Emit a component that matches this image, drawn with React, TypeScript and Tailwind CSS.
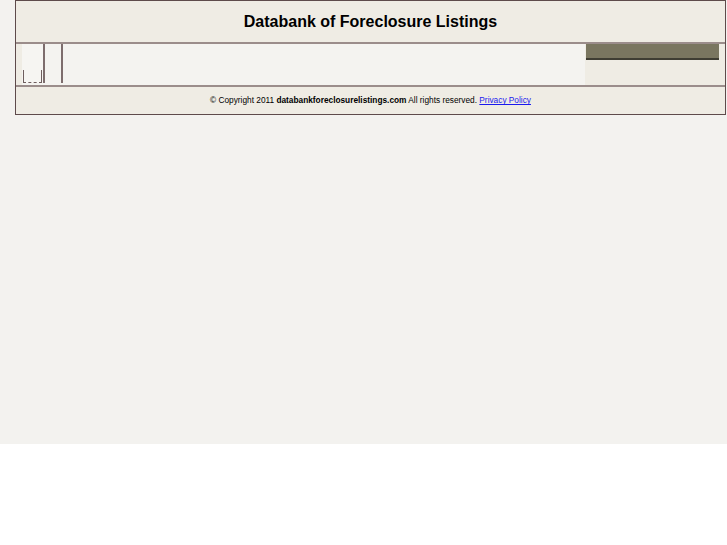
export default function App() {
  return (
    <div className="min-h-[444px] bg-[#f3f2ef] pl-[15px] pr-px font-['Liberation_Sans',Arial,sans-serif]">
      <div className="border border-[#5e4b4b] bg-[#efece4]">
        <div className="flex h-[43px] items-center justify-center border-b-2 border-[#9b8d8b]">
          <h1 className="text-[16px] font-bold text-black">Databank of Foreclosure Listings</h1>
        </div>
        <div className="flex h-[43px] border-b-2 border-[#9b8d8b]">
          <div className="flex flex-1 bg-[#f4f3f0]">
            <div className="w-[6px] bg-[#efece4]" />
            <div className="flex h-[39px] w-[21px] items-end bg-[#f6f5f2] pl-px">
              <div className="relative h-[13px] w-[19px]">
                <div className="absolute inset-y-0 left-0 w-px bg-[#6e5e5e]" />
                <div className="absolute inset-y-0 right-0 w-px bg-[#6e5e5e]" />
                <div className="absolute inset-x-0 bottom-0 border-b border-dashed border-[#6e5e5e]" />
              </div>
            </div>
            <div className="h-[39px] w-[2px] bg-[#7d6d6d]" />
            <div className="w-[16px]" />
            <div className="h-[39px] w-[2px] bg-[#7d6d6d]" />
          </div>
          <div className="w-[140px] bg-[#efece4]">
            <div className="ml-px h-[16px] w-[133px] border-b-2 border-[#3f3d33] bg-[#7a7660]" />
          </div>
        </div>
        <div className="flex h-[27px] items-center justify-center text-[8.3px] text-black">
          <span>
            © Copyright 2011 <b>databankforeclosurelistings.com</b> All rights reserved.{' '}
            <a href="#" className="text-[#1a1aee] underline">Privacy Policy</a>
          </span>
        </div>
      </div>
    </div>
  )
}
